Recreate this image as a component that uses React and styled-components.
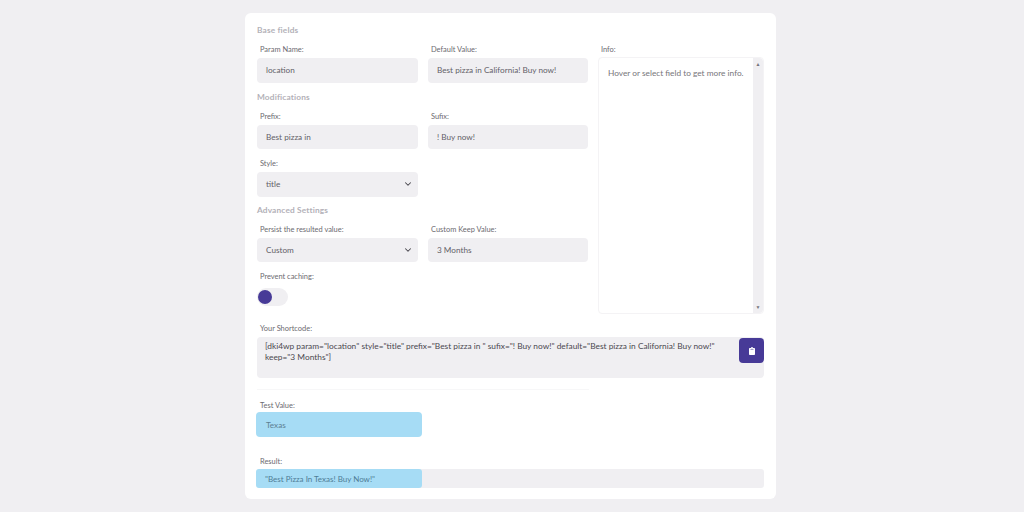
import React from "react";
import styled, { createGlobalStyle } from "styled-components";
import { ChevronDown } from "lucide-react";
import { FaClipboard } from "react-icons/fa";

const GlobalStyle = createGlobalStyle`
  html, body {
    margin: 0;
    height: 100%;
    background: #f0eff2;
    font-family: "Lato", "Open Sans", sans-serif;
  }
`;

const Page = styled.div`
  display: flex;
  justify-content: center;
  width: 1024px;
  height: 512px;
  padding-top: 13px;
  box-sizing: border-box;
  overflow: hidden;
`;

const Card = styled.main`
  width: 531px;
  height: 486px;
  margin-right: 3px;
  padding: 11px 12px 0;
  box-sizing: border-box;
  background: #ffffff;
  border-radius: 6px;
`;

const Top = styled.div`
  display: flex;
  gap: 9px;
`;

const Left = styled.div`
  width: 332px;
`;

const Heading = styled.h3`
  margin: ${(p) => p.$top || 0}px 0 0;
  height: 12px;
  font-size: 8.3px;
  line-height: 12px;
  font-weight: 700;
  letter-spacing: 0.15px;
  color: #b3b1b8;
`;

const Row = styled.div`
  display: flex;
  gap: 10.5px;
  margin-top: ${(p) => p.$top || 7}px;
`;

const Field = styled.div`
  width: ${(p) => p.$width || 160.5}px;
`;

const Label = styled.div`
  height: 12px;
  margin-bottom: 3px;
  padding-left: 3px;
  font-size: 7.45px;
  line-height: 14px;
  color: #6c6a70;
`;

const Control = styled.div`
  display: flex;
  align-items: center;
  justify-content: space-between;
  height: ${(p) => p.$height || 24.5}px;
  padding: 0 5px 0 9px;
  box-sizing: border-box;
  background: #f0eff2;
  border-radius: 4px;
  font-size: 8.2px;
  color: #636168;
`;

const Chevron = styled(ChevronDown)`
  width: 10px;
  height: 10px;
  color: #47454c;
`;

const Switch = styled.div`
  display: flex;
  align-items: center;
  width: 31px;
  height: 18px;
  margin-top: 6px;
  background: #f0eff2;
  border-radius: 9px;
`;

const Knob = styled.span`
  width: 14px;
  height: 14px;
  margin-left: 1px;
  background: #473a97;
  border-radius: 50%;
`;

const InfoColumn = styled.div`
  width: 166px;
  padding-top: 19px;
`;

const InfoLabel = styled(Label)`
  margin-bottom: 2px;
`;

const InfoBox = styled.div`
  display: flex;
  justify-content: space-between;
  height: 257px;
  border: 1px solid #f4f3f5;
  border-radius: 4px;
  box-sizing: border-box;
`;

const InfoText = styled.div`
  padding: 9px 9px;
  font-size: 8.3px;
  line-height: 12px;
  white-space: nowrap;
  color: #77757b;
`;

const Scrollbar = styled.div`
  display: flex;
  flex-direction: column;
  align-items: center;
  justify-content: space-between;
  width: 10px;
  padding: 3px 0;
  box-sizing: border-box;
  background: #f0eff2;
  border-radius: 0 4px 4px 0;
  color: #77757b;
  font-size: 5px;
  line-height: 6px;
`;

const ShortcodeSection = styled.section`
  margin-top: 8px;
`;

const ShortcodeBox = styled.div`
  display: flex;
  justify-content: space-between;
  height: 41px;
  padding: 4px 0 0 8px;
  box-sizing: border-box;
  background: #f0eff2;
  border-radius: 4px;
`;

const ShortcodeText = styled.code`
  width: 470px;
  font-family: "Lato", "Open Sans", sans-serif;
  font-size: 8.33px;
  line-height: 11px;
  color: #4a484f;
`;

const CopyButton = styled.button`
  display: flex;
  align-items: center;
  justify-content: center;
  width: 25px;
  height: 25px;
  margin-top: -3px;
  padding: 0;
  border: 0;
  background: #473a97;
  border-radius: 4px;
  color: #ffffff;
  font-size: 8px;
`;

const Divider = styled.hr`
  width: 332px;
  height: 1px;
  margin: 11px 0 0;
  border: 0;
  background: #f7f7f8;
`;

const TestSection = styled.section`
  margin-top: 9px;
`;

const HighlightField = styled(Control)`
  width: 166px;
  height: 25px;
  margin: -2px 0 0 -1px;
  padding-left: 10px;
  background: #a6dcf5;
  color: #5d7f92;
`;

const ResultSection = styled.section`
  margin-top: 18px;
`;

const ResultBar = styled.div`
  height: 19px;
  margin-top: -1px;
  background: #f0eff2;
  border-radius: 3px;
`;

const ResultValue = styled(HighlightField)`
  height: 19px;
  margin-top: 0;
  padding-left: 9px;
  border-radius: 3px;
  font-size: 8px;
  color: #4f7c96;
`;

const App = () => {
  return (
    <Page>
      <GlobalStyle />
      <Card>
        <Top>
          <Left>
            <Heading>Base fields</Heading>
            <Row>
              <Field>
                <Label>Param Name:</Label>
                <Control>location</Control>
              </Field>
              <Field $width={160}>
                <Label>Default Value:</Label>
                <Control>Best pizza in California! Buy now!</Control>
              </Field>
            </Row>
            <Heading $top={8}>Modifications</Heading>
            <Row>
              <Field>
                <Label>Prefix:</Label>
                <Control>Best pizza in</Control>
              </Field>
              <Field $width={160}>
                <Label>Sufix:</Label>
                <Control>! Buy now!</Control>
              </Field>
            </Row>
            <Row $top={8}>
              <Field>
                <Label>Style:</Label>
                <Control>
                  title
                  <Chevron strokeWidth={2.5} />
                </Control>
              </Field>
            </Row>
            <Heading $top={7}>Advanced Settings</Heading>
            <Row>
              <Field>
                <Label>Persist the resulted value:</Label>
                <Control>
                  Custom
                  <Chevron strokeWidth={2.5} />
                </Control>
              </Field>
              <Field $width={160}>
                <Label>Custom Keep Value:</Label>
                <Control>3 Months</Control>
              </Field>
            </Row>
            <Row $top={8}>
              <Field>
                <Label>Prevent caching:</Label>
                <Switch>
                  <Knob />
                </Switch>
              </Field>
            </Row>
          </Left>
          <InfoColumn>
            <InfoLabel>Info:</InfoLabel>
            <InfoBox>
              <InfoText>Hover or select field to get more info.</InfoText>
              <Scrollbar>
                <span>▲</span>
                <span>▼</span>
              </Scrollbar>
            </InfoBox>
          </InfoColumn>
        </Top>
        <ShortcodeSection>
          <Label>Your Shortcode:</Label>
          <ShortcodeBox>
            <ShortcodeText>
              [dki4wp param="location" style="title" prefix="Best pizza in " sufix="! Buy now!" default="Best pizza in California! Buy now!" keep="3 Months"]
            </ShortcodeText>
            <CopyButton aria-label="Copy">
              <FaClipboard />
            </CopyButton>
          </ShortcodeBox>
        </ShortcodeSection>
        <Divider />
        <TestSection>
          <Label>Test Value:</Label>
          <HighlightField>Texas</HighlightField>
        </TestSection>
        <ResultSection>
          <Label>Result:</Label>
          <ResultBar>
            <ResultValue>"Best Pizza In Texas! Buy Now!"</ResultValue>
          </ResultBar>
        </ResultSection>
      </Card>
    </Page>
  );
};

export default App;
